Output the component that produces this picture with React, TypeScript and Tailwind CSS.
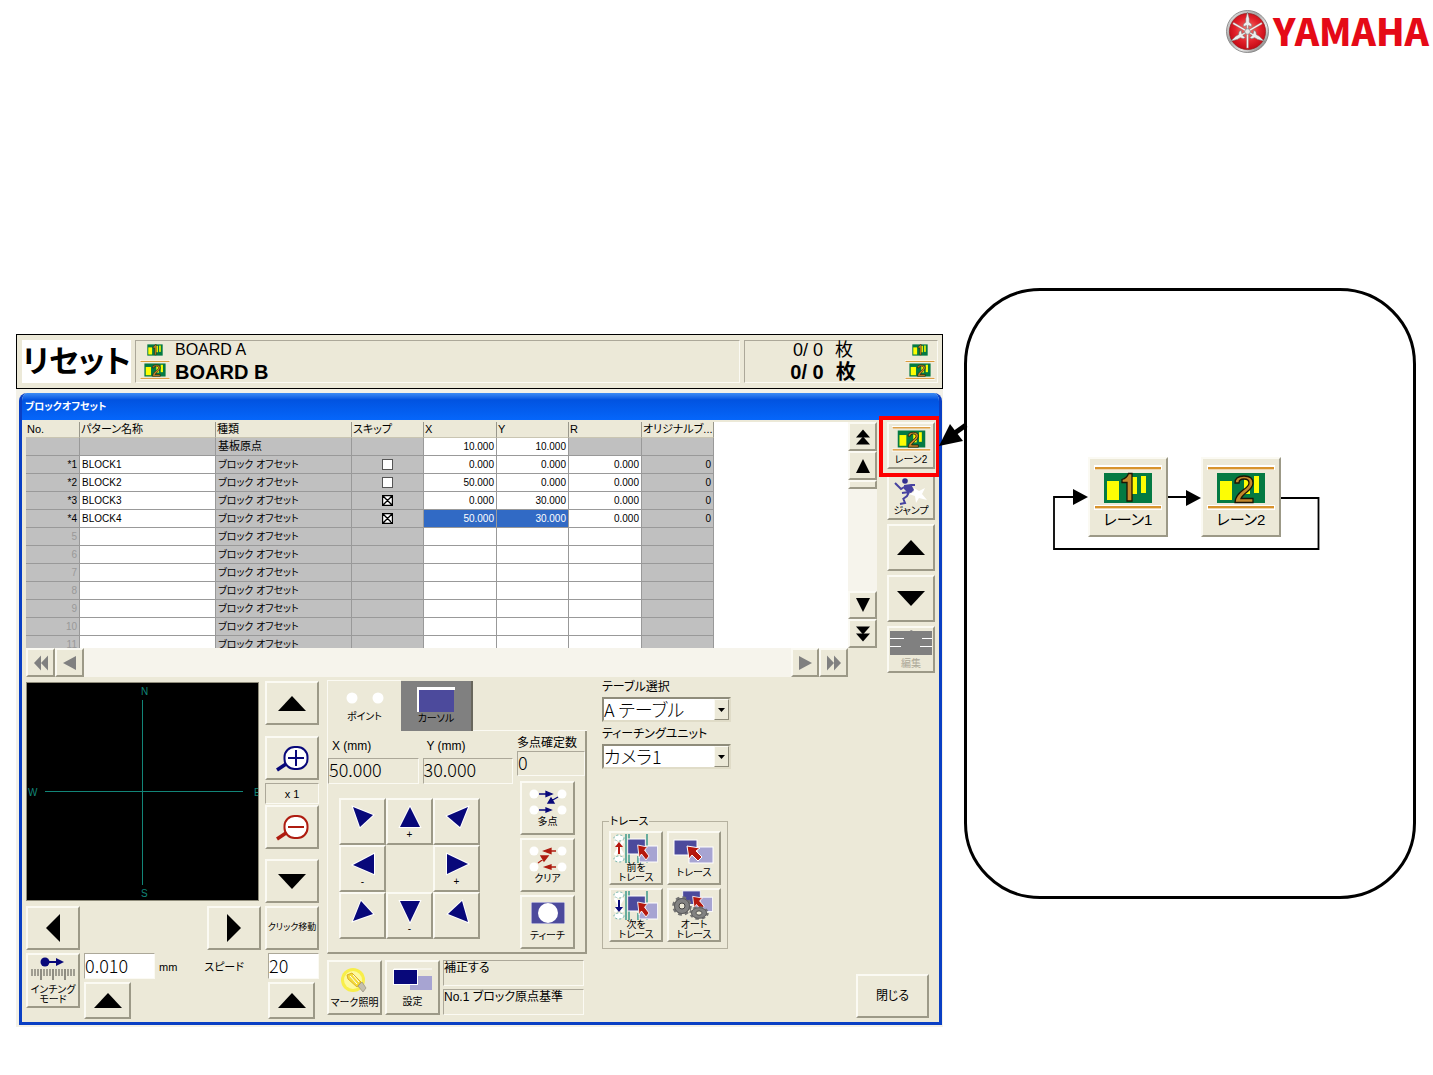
import { useState, type ReactNode } from "react";

const raised =
  "border-2 border-t-[#fbfaf3] border-l-[#fbfaf3] border-r-[#9c9987] border-b-[#9c9987] bg-[#ece9d8]";
const sunken =
  "border border-t-[#aca899] border-l-[#aca899] border-r-[#fbfaf3] border-b-[#fbfaf3]";
const value = "font-['Noto_Sans_CJK_JP',sans-serif] text-[18px] font-light";

type BtnProps = { label: string; className?: string; children?: ReactNode };

function Btn({ label, className = "", children }: BtnProps) {
  return (
    <button
      type="button"
      aria-label={label}
      className={`${raised} flex shrink-0 flex-col items-center justify-center text-center ${className}`}
    >
      {children}
    </button>
  );
}

function Tri({ dir, w = 28, h = 15, color = "#000" }: { dir: "up" | "down" | "left" | "right"; w?: number; h?: number; color?: string }) {
  const pts = {
    up: `${w / 2},0 ${w},${h} 0,${h}`,
    down: `0,0 ${w},0 ${w / 2},${h}`,
    left: `${w},0 ${w},${h} 0,${h / 2}`,
    right: `0,0 ${w},${h / 2} 0,${h}`,
  }[dir];
  return (
    <svg width={w} height={h} viewBox={`0 0 ${w} ${h}`} aria-hidden="true">
      <polygon points={pts} fill={color} />
    </svg>
  );
}

function DoubleTri({ dir, color = "#000" }: { dir: "up" | "down" | "left" | "right"; color?: string }) {
  const pts = {
    up: ["8,0 15,8 1,8", "8,7 15,15 1,15"],
    down: ["1,0 15,0 8,8", "1,7 15,7 8,15"],
    left: ["8,0 8,15 1,7.5", "15,0 15,15 8,7.5"],
    right: ["1,0 8,7.5 1,15", "8,0 15,7.5 8,15"],
  }[dir];
  return (
    <svg width="16" height="16" viewBox="0 0 16 15" aria-hidden="true">
      <polygon points={pts[0]} fill={color} />
      <polygon points={pts[1]} fill={color} />
    </svg>
  );
}

function LaneBoard({ n, rails = true, className }: { n: 1 | 2; rails?: boolean; className: string }) {
  return (
    <svg className={className} viewBox={rails ? "0 0 68 46" : "9 7 50 32"} preserveAspectRatio="none" aria-hidden="true">
      {rails && (
        <>
          <rect x="0" y="0" width="68" height="5" fill="#fff" />
          <rect x="1" y="2" width="66" height="2.4" fill="#d8932c" />
          <rect x="0" y="40" width="68" height="5" fill="#fff" />
          <rect x="1" y="41" width="66" height="2.4" fill="#d8932c" />
        </>
      )}
      <rect x="10" y="8" width="48" height="30" fill="#047a43" />
      <rect x="13" y="16" width="12" height="19" fill="#fdfd04" />
      <rect x="37" y="12" width="6" height="17" fill="#fdfd04" />
      <rect x="47" y="11" width="5" height="17" fill="#fdfd04" />
      {n === 1 ? (
        <path d="M38 8.500V36H33V17.500H28V14.500Q33 13 34.500 8.500Z" fill="#c4882c" stroke="#1c1403" strokeWidth="1.300" />
      ) : (
        <path
          d="M28 18Q28 11 37 11Q46 11 46 18Q46 22 40 27Q35 31 34 33.500H46V37.500H28Q28 31 36 25Q42 21 42 18Q42 14 37 14Q32 14 32 18Z"
          fill="#c4882c"
          stroke="#1c1403"
          strokeWidth="1.300"
        />
      )}
    </svg>
  );
}

function Jumper() {
  return (
    <svg width="34" height="28" viewBox="0 0 34 28" aria-hidden="true">
      <path d="M20 11l5 3 6-3-3 6 5 6-8-2-3 5-1-7-6-2 5-2z" fill="#fff" />
      <circle cx="11" cy="4" r="2.800" fill="#33308f" />
      <path d="M10 8l7-1 3 6-3 3-4-1-3-3z" fill="#4743a0" />
      <path d="M1 6l6 6 5-3M17 8l4 0M15 15l-7 1M15 15l-2 4-4 3M9 21l2 5-5 1" fill="none" stroke="#4743a0" strokeWidth="2" />
    </svg>
  );
}

function EditIcon() {
  return (
    <svg width="42" height="26" viewBox="0 0 42 26" aria-hidden="true">
      <path d="M0 1h20l1-1 2 1h19v24H0z" fill="#808080" />
      <path d="M0 8.500h14M32 8.500h10M0 16.500h11M30 16.500h12" stroke="#fff" strokeWidth="1" />
    </svg>
  );
}

function Magnifier({ plus }: { plus: boolean }) {
  const c = plus ? "#08087a" : "#ae1c10";
  return (
    <svg width="33" height="27" viewBox="0 0 33 27" aria-hidden="true">
      <path d="M1 25l9-6" stroke={c} strokeWidth="3.500" />
      <rect x="8.500" y="2" width="23" height="22" rx="10" fill="#fff" stroke={c} strokeWidth="2" />
      <path d={plus ? "M12 13h16M20 5v16" : "M12 13h16"} stroke={c} strokeWidth="2" />
    </svg>
  );
}

function InchingIcon() {
  return (
    <svg width="44" height="24" viewBox="0 0 44 24" aria-hidden="true">
      <circle cx="14" cy="5" r="4.500" fill="#08087a" />
      <path d="M18 4h7V1l8 4-8 4V6h-7z" fill="#08087a" />
      <path d="M1 12v7M4 12v7M7 12v7M13 12v7M16 12v7M19 12v7M25 12v7M28 12v7M31 12v7M37 12v7M40 12v7M43 12v7" stroke="#77756c" strokeWidth="1.300" />
      <path d="M10 12v11M22 12v11M34 12v11" stroke="#77756c" strokeWidth="1.600" />
    </svg>
  );
}

const padShapes = {
  nw: "3,3 23,11 10,23",
  n: "13,3 23,23 3,23",
  ne: "24,3 3,12 16,23",
  w: "24,3 24,23 3,14",
  e: "3,3 24,13 3,23",
  sw: "11,3 23,16 3,23",
  s: "3,3 23,3 13,24",
  se: "18,3 24,24 4,16",
};

function PadButton({ dir, sign = "" }: { dir: keyof typeof padShapes; sign?: string }) {
  return (
    <button
      type="button"
      aria-label={`移動 ${dir}`}
      className={`${raised} flex size-[47px] flex-col items-center pt-1`}
    >
      <svg width="26" height="26" viewBox="0 0 26 26" className="shrink-0" aria-hidden="true">
        <polygon points={padShapes[dir]} fill="#08087a" stroke="#fff" strokeWidth="2" paintOrder="stroke" />
      </svg>
      <span className="text-[10px] leading-[10px]">{sign}</span>
    </button>
  );
}

function MultiPoint({ clear = false }: { clear?: boolean }) {
  const c = clear ? "#ae1c10" : "#08087a";
  return (
    <svg width="38" height="28" viewBox="0 0 38 28" aria-hidden="true">
      <g fill="#fff">
        <circle cx="5" cy="6" r="4.500" />
        <circle cx="33" cy="6" r="4.500" />
        <circle cx="5" cy="22" r="4.500" />
        <circle cx="33" cy="22" r="4.500" />
      </g>
      {clear ? (
        <g fill={c} stroke={c} strokeWidth="1.300">
          <path d="M27 6H17M22 3.500v5L15 6zM27 22H17M22 20v4l-6-2zM9 18l7-5M12 11l7 0-4 5z" />
        </g>
      ) : (
        <g fill={c} stroke={c} strokeWidth="1.300">
          <path d="M10 6h10M17 3.500v5L23 6zM10 22h10M17 20v4l5-2zM29 9l-7 4M22 10l-3 5 6 0z" />
        </g>
      )}
    </svg>
  );
}

function TeachIcon() {
  return (
    <svg width="34" height="22" viewBox="0 0 34 22" aria-hidden="true">
      <rect width="34" height="22" fill="#4c4a9c" stroke="#fff" strokeWidth="1" />
      <circle cx="17" cy="11" r="10" fill="#fff" />
    </svg>
  );
}

function LampIcon() {
  return (
    <svg width="30" height="30" viewBox="0 0 30 30" aria-hidden="true">
      <circle cx="13" cy="13" r="12" fill="#f8ee4a" />
      <circle cx="13" cy="13" r="9" fill="#fdf9a0" />
      <path d="M7 8l5-2 9 9-4 5-9-8z" fill="#f4dc3a" stroke="#dcae28" />
      <path d="M10 9l7 8M13 8l6 7" stroke="#fff" />
      <path d="M18 19l4-4 4 6-3 4z" fill="#c5bfae" stroke="#958f7c" strokeWidth=".7" />
    </svg>
  );
}

function SettingIcon() {
  return (
    <svg width="40" height="24" viewBox="0 0 40 24" aria-hidden="true">
      <path d="M1 1h38" stroke="#fff" />
      <rect x="17" y="8" width="22" height="14" fill="#a7a4d2" />
      <rect x="0" y="1" width="25" height="16" fill="#fff" />
      <rect x="1" y="2" width="23" height="14" fill="#08087a" />
    </svg>
  );
}

function TraceBase() {
  return (
    <>
      <rect x="16" y="8" width="24" height="16" fill="#a7a4d2" stroke="#fff" />
      <rect x="1" y="1" width="23" height="15" fill="#4c4a9c" stroke="#fff" />
      <path d="M14 7l13 2-4 3 6 6-4 4-6-6-3 4z" fill="#b5180e" stroke="#fff" />
    </>
  );
}

function TraceIcon() {
  return (
    <svg width="42" height="25" viewBox="0 0 42 25" aria-hidden="true">
      <TraceBase />
    </svg>
  );
}

function TraceStepIcon({ next = false }: { next?: boolean }) {
  return (
    <svg width="46" height="29" viewBox="0 0 46 29" aria-hidden="true">
      <ellipse cx="6" cy="4" rx="5" ry="3" fill="#fff" stroke="#66b0a6" strokeDasharray="2 2" />
      <ellipse cx="6" cy="25" rx="5" ry="3" fill="#fff" stroke="#66b0a6" strokeDasharray="2 2" />
      <path d="M2 7l8 14M10 7L2 21" stroke="#fff" strokeWidth="3" />
      {next ? (
        <path d="M5 9h2v7h3l-4 5-4-5h3z" fill="#08087a" />
      ) : (
        <path d="M5 20h2v-7h3l-4-5-4 5h3z" fill="#b5180e" />
      )}
      <path d="M13 0v29M16 0v29M25 22v7M34 0v29" stroke="#128578" strokeWidth="1.200" />
      <g transform="translate(14 4) scale(.76 1)">
        <TraceBase />
      </g>
    </svg>
  );
}

function Gear({ x, y }: { x: number; y: number }) {
  return (
    <g transform={`translate(${x} ${y})`}>
      <circle r="8" fill="#737373" stroke="#737373" strokeWidth="3.500" strokeDasharray="3.500 2.800" />
      <circle r="7.500" fill="#828282" stroke="#5c5c5c" />
      <circle r="3" fill="#ece9d8" stroke="#444" />
    </g>
  );
}

function AutoTraceIcon() {
  return (
    <svg width="44" height="30" viewBox="0 0 44 30" aria-hidden="true">
      <g transform="translate(10 0) scale(.76 .9)">
        <TraceBase />
      </g>
      <Gear x={10} y={16} />
      <g transform="translate(27 23) scale(1 .7)">
        <Gear x={0} y={0} />
      </g>
    </svg>
  );
}

function YamahaMark() {
  return (
    <svg width="43" height="43" viewBox="0 0 44 44" aria-hidden="true">
      <defs>
        <linearGradient id="ring" x1="0" y1="0" x2="1" y2="1">
          <stop offset="0" stopColor="#f2f2f2" />
          <stop offset=".4" stopColor="#a5a5a5" />
          <stop offset=".65" stopColor="#e8e8e8" />
          <stop offset="1" stopColor="#555" />
        </linearGradient>
        <radialGradient id="disc" cx=".5" cy=".45" r=".55">
          <stop offset="0" stopColor="#f48076" />
          <stop offset=".6" stopColor="#e3222b" />
          <stop offset="1" stopColor="#c40915" />
        </radialGradient>
      </defs>
      <circle cx="22" cy="22" r="21.500" fill="url(#ring)" stroke="#777" strokeWidth=".8" />
      <circle cx="22" cy="22" r="18.500" fill="url(#disc)" stroke="#8e1a1a" strokeWidth=".7" />
      {[0, 120, 240].map((a) => (
        <g key={a} transform={`rotate(${a} 22 22)`}>
          <path d="M22 2l1.800 7v3.500l2.400 2v2.600l-3.200-1.300-.3 6.200h-1.400l-.3-6.200-3.200 1.300v-2.600l2.400-2V9z" fill="#eee" stroke="#6d6d6d" strokeWidth=".5" />
          <path d="M21 22h2v17h-2z" fill="#f4f4f4" stroke="#8b5a5a" strokeWidth=".4" />
        </g>
      ))}
      <circle cx="22" cy="22" r="2.800" fill="#e9e9e9" stroke="#777" strokeWidth=".6" />
    </svg>
  );
}

type Row = { no: string; name?: string; skip?: boolean; x?: string; y?: string; r?: string; org?: string; selected?: boolean };

const rows: Row[] = [
  { no: "*1", name: "BLOCK1", skip: false, x: "0.000", y: "0.000", r: "0.000", org: "0" },
  { no: "*2", name: "BLOCK2", skip: false, x: "50.000", y: "0.000", r: "0.000", org: "0" },
  { no: "*3", name: "BLOCK3", skip: true, x: "0.000", y: "30.000", r: "0.000", org: "0" },
  { no: "*4", name: "BLOCK4", skip: true, x: "50.000", y: "30.000", r: "0.000", org: "0", selected: true },
  { no: "5" }, { no: "6" }, { no: "7" }, { no: "8" }, { no: "9" }, { no: "10" }, { no: "11" },
];

function SkipBox({ label, initial }: { label: string; initial: boolean }) {
  const [on, setOn] = useState(initial);
  return (
    <label className="grid justify-center">
      <input
        type="checkbox"
        aria-label={label}
        checked={on}
        onChange={() => setOn(!on)}
        className="peer col-start-1 row-start-1 size-[11px] appearance-none border border-[#555] bg-white"
      />
      <svg viewBox="0 0 11 11" className="pointer-events-none col-start-1 row-start-1 hidden size-[11px] peer-checked:block" aria-hidden="true">
        <path d="M.5.5h10v10H.5zM1 1l9 9M10 1l-9 9" fill="none" stroke="#000" strokeWidth="1.400" />
      </svg>
    </label>
  );
}

const headCell =
  "h-4 border-r border-b border-r-[#9a988c] border-b-[#c9c5b2] bg-[#ece9d8] px-px py-0 text-left text-[11px] font-normal";
const cell = "h-[18px] border-r border-b border-[#999] px-0.5 py-0 leading-[17px]";

function OffsetTable() {
  return (
    <table className="w-[688px] shrink-0 table-fixed border-separate border-spacing-0 text-[10px] leading-[15px] whitespace-nowrap">
      <colgroup>
        <col className="w-[54px]" />
        <col className="w-[136px]" />
        <col className="w-[136px]" />
        <col className="w-[72px]" />
        <col className="w-[73px]" />
        <col className="w-[72px]" />
        <col className="w-[73px]" />
        <col className="w-[72px]" />
      </colgroup>
      <thead>
        <tr>
          {["No.", "パターン名称", "種類", "スキップ", "X", "Y", "R", "オリジナルブ..."].map((h) => (
            <th key={h} scope="col" className={headCell}>{h}</th>
          ))}
        </tr>
      </thead>
      <tbody>
        <tr>
          <td className={`${cell} bg-[#c0c0c0]`} />
          <td className={`${cell} bg-[#c0c0c0]`} />
          <td className={`${cell} bg-[#c0c0c0] text-[11px]`}>基板原点</td>
          <td className={`${cell} bg-[#c0c0c0]`} />
          <td className={`${cell} bg-white text-right`}>10.000</td>
          <td className={`${cell} bg-white text-right`}>10.000</td>
          <td className={`${cell} bg-[#c0c0c0]`} />
          <td className={`${cell} bg-[#c0c0c0]`} />
        </tr>
        {rows.map((r) => {
          const num = r.selected ? "bg-[#316ac5] text-white" : "bg-white";
          return (
            <tr key={r.no}>
              <td className={`${cell} bg-[#c0c0c0] text-right ${r.name ? "" : "text-[#999]"}`}>{r.no}</td>
              <td className={`${cell} bg-white`}>{r.name}</td>
              <td className={`${cell} bg-[#c0c0c0]`}>ブロック オフセット</td>
              <td className={`${cell} bg-[#c0c0c0]`}>
                {r.skip !== undefined && <SkipBox label={`${r.name} スキップ`} initial={r.skip} />}
              </td>
              <td className={`${cell} text-right ${num}`}>{r.x}</td>
              <td className={`${cell} text-right ${num}`}>{r.y}</td>
              <td className={`${cell} bg-white text-right`}>{r.r}</td>
              <td className={`${cell} bg-[#c0c0c0] text-right`}>{r.org}</td>
            </tr>
          );
        })}
      </tbody>
    </table>
  );
}

function StatusBar() {
  return (
    <header className="flex h-[55px] items-stretch gap-1 border border-black bg-[#ece9d8] p-[5px] pr-1">
      <div className="flex w-[109px] items-center justify-center bg-white text-[31px] leading-none font-bold">リセット</div>
      <div className={`${sunken} grid flex-1 grid-cols-[30px_1fr] grid-rows-[17px_24px] items-center gap-x-[5px] pl-1`}>
        <LaneBoard n={1} rails={false} className="h-3 w-4 justify-self-center" />
        <span className="text-[16px] leading-4">BOARD A</span>
        <LaneBoard n={2} className="h-5 w-[30px]" />
        <span className="pt-1 text-[20px] leading-5 font-bold">BOARD B</span>
      </div>
      <div className={`${sunken} grid w-[194px] grid-cols-[1fr_30px] grid-rows-[17px_24px] items-center gap-x-1 pr-0.5`}>
        <span className="flex justify-center gap-3 text-[18px] leading-[18px]"><span>0/ 0</span><span>枚</span></span>
        <LaneBoard n={1} rails={false} className="h-3 w-4 justify-self-center" />
        <span className="flex justify-center gap-3 pt-1 text-[20px] leading-5 font-bold"><span>0/ 0</span><span>枚</span></span>
        <LaneBoard n={2} className="h-5 w-[30px]" />
      </div>
    </header>
  );
}

function GridArea() {
  return (
    <div className="flex gap-2.5 pr-1">
      <div className="min-w-0 flex-1">
        <div className="flex h-[226px]">
          <div className="min-w-0 flex-1 overflow-hidden bg-white">
            <OffsetTable />
          </div>
          <div className="flex w-[29px] flex-col bg-[#f6f4ec]">
            <Btn label="先頭へ" className="h-[29px]"><DoubleTri dir="up" /></Btn>
            <Btn label="上へ" className="h-[29px]"><Tri dir="up" w={14} h={14} /></Btn>
            <div className={`${raised} h-[9px]`} />
            <Btn label="下へ" className="mt-auto h-7"><Tri dir="down" w={14} h={14} /></Btn>
            <Btn label="末尾へ" className="h-[29px]"><DoubleTri dir="down" /></Btn>
          </div>
        </div>
        <div className="mr-[29px] flex h-[29px] bg-[#f6f4ec]">
          <Btn label="左端へ" className="w-[29px]"><DoubleTri dir="left" color="#808080" /></Btn>
          <Btn label="左へ" className="w-[29px]"><Tri dir="left" w={13} h={14} color="#808080" /></Btn>
          <Btn label="右へ" className="ml-auto w-7"><Tri dir="right" w={13} h={14} color="#808080" /></Btn>
          <Btn label="右端へ" className="w-[29px]"><DoubleTri dir="right" color="#808080" /></Btn>
        </div>
      </div>
      <nav className="flex w-12 flex-col gap-1 text-[10px] leading-3">
        <div className="relative">
          <Btn label="レーン2" className="h-[47px] w-full gap-0.5">
            <LaneBoard n={2} className="h-[26px] w-[39px]" />
            <span>レーン2</span>
          </Btn>
          <div className="pointer-events-none absolute -top-1.5 -right-[5px] -bottom-2 -left-2 z-10 border-4 border-[#fe0000]" />
        </div>
        <Btn label="ジャンプ" className="h-[47px]"><Jumper /><span>ジャンプ</span></Btn>
        <Btn label="前へ" className="h-[47px]"><Tri dir="up" /></Btn>
        <Btn label="次へ" className="h-[47px]"><Tri dir="down" /></Btn>
        <Btn label="編集" className="h-[47px] gap-0.5 text-[#aca899]"><EditIcon /><span>編集</span></Btn>
      </nav>
    </div>
  );
}

function CameraPanel() {
  return (
    <section className="flex w-[293px] flex-col gap-[3px] pt-px">
      <div className="flex gap-1.5">
        <div className="mt-px mb-0.5 flex-1 border border-[#8f8c7b] bg-black">
          <svg width="100%" height="100%" viewBox="0 0 231 217" aria-hidden="true">
            <path d="M115.500 17v185M18 108.500h198" stroke="#128578" />
            <g fill="#128578" fontSize="10" fontFamily="Liberation Sans, sans-serif">
              <text x="114" y="12">N</text>
              <text x="114" y="214">S</text>
              <text x="1" y="113">W</text>
              <text x="227" y="113">E</text>
            </g>
          </svg>
        </div>
        <div className="flex w-[54px] flex-col">
          <Btn label="上へ移動" className="h-11"><Tri dir="up" /></Btn>
          <Btn label="拡大" className="mt-[11px] h-11"><Magnifier plus /></Btn>
          <div className={`${sunken} mt-[3px] mb-px h-[21px] text-center text-[11px] leading-5`}>x 1</div>
          <Btn label="縮小" className="h-11"><Magnifier plus={false} /></Btn>
          <Btn label="下へ移動" className="mt-2.5 h-11"><Tri dir="down" /></Btn>
        </div>
      </div>
      <div className="flex">
        <Btn label="左へ移動" className="h-11 w-[54px]"><Tri dir="left" w={14} h={28} /></Btn>
        <Btn label="右へ移動" className="ml-auto h-11 w-[54px]"><Tri dir="right" w={14} h={28} /></Btn>
        <Btn label="クリック移動" className="ml-1 h-11 w-[54px] text-[9px] whitespace-nowrap">クリック移動</Btn>
      </div>
      <div className="flex items-start text-[11px]">
        <Btn label="インチングモード" className="h-[55px] w-[54px] text-[10px] leading-[10px]">
          <InchingIcon />
          <span className="mt-1 whitespace-nowrap">インチング<br />モード</span>
        </Btn>
        <div className="ml-1 flex flex-col gap-[3px]">
          <input id="pitch" defaultValue="0.010" className={`${sunken} ${value} h-[26px] w-[71px] bg-white pb-0.5`} />
          <Btn label="ピッチを上げる" className="h-[37px] w-[47px]"><Tri dir="up" /></Btn>
        </div>
        <label htmlFor="pitch" className="ml-1 leading-[28px]">mm</label>
        <label htmlFor="speed" className="ml-auto pr-6 leading-[28px]">スピード</label>
        <div className="flex flex-col gap-[3px]">
          <input id="speed" defaultValue="20" className={`${sunken} ${value} h-[26px] w-[51px] bg-white pb-0.5`} />
          <Btn label="スピードを上げる" className="h-[37px] w-[47px]"><Tri dir="up" /></Btn>
        </div>
      </div>
    </section>
  );
}

function PositionPanel() {
  return (
    <section className="flex w-[260px] flex-col">
      <div className="flex h-[51px] text-[10px] leading-3">
        <button type="button" className="flex w-[74px] flex-col items-center border-t border-l border-[#fbfaf3] pt-2.5">
          <svg width="40" height="14" viewBox="0 0 40 14" aria-hidden="true">
            <circle cx="7" cy="7" r="5.500" fill="#fff" />
            <circle cx="33" cy="7" r="5.500" fill="#fff" />
          </svg>
          <span className="mt-1.5">ポイント</span>
        </button>
        <button type="button" className="mt-px flex w-[72px] flex-col items-center border-r-2 border-[#68665c] bg-[#808080] pt-1.5">
          <svg width="38" height="25" viewBox="0 0 38 25" aria-hidden="true">
            <rect width="38" height="3" fill="#fff" />
            <rect width="2" height="25" fill="#fff" />
            <rect x="2" y="3" width="35" height="22" fill="#4c4a9c" />
          </svg>
          <span className="mt-px">カーソル</span>
        </button>
        <div className="flex-1 border-b border-[#fbfaf3]" />
      </div>
      <div className="flex h-[223px] gap-1 border-r-2 border-b-2 border-l border-r-[#9c9987] border-b-[#9c9987] border-l-[#fbfaf3]">
        <div className="flex w-[185px] flex-col pt-1.5">
          <div className="flex gap-1 text-[12px]">
            <div className="flex-1"><div className="mb-[3px] pl-1 leading-[18px]">X (mm)</div><div className={`${sunken} ${value} h-[26px] leading-5`}>50.000</div></div>
            <div className="flex-1"><div className="mb-[3px] pl-1 leading-[18px]">Y (mm)</div><div className={`${sunken} ${value} h-[26px] leading-5`}>30.000</div></div>
          </div>
          <div className="mt-3.5 ml-[11px] grid w-[141px] grid-cols-3">
            <PadButton dir="nw" />
            <PadButton dir="n" sign="+" />
            <PadButton dir="ne" />
            <PadButton dir="w" sign="-" />
            <span />
            <PadButton dir="e" sign="+" />
            <PadButton dir="sw" />
            <PadButton dir="s" sign="-" />
            <PadButton dir="se" />
          </div>
        </div>
        <div className="flex flex-1 flex-col pt-1">
          <div className="text-[12px] leading-4 whitespace-nowrap">多点確定数</div>
          <div className={`${sunken} ${value} h-[25px] leading-5`}>0</div>
          <div className="mt-[5px] ml-[3px] flex flex-col gap-[3px] text-[10px] leading-3">
            <Btn label="多点" className="h-[54px] w-[55px]"><MultiPoint /><span>多点</span></Btn>
            <Btn label="クリア" className="h-[54px] w-[55px]"><MultiPoint clear /><span>クリア</span></Btn>
            <Btn label="ティーチ" className="h-[54px] w-[55px] gap-1.5"><TeachIcon /><span>ティーチ</span></Btn>
          </div>
        </div>
      </div>
      <div className="mt-1.5 flex gap-[3px] text-[10px] leading-3">
        <Btn label="マーク照明" className="h-[55px] w-[55px]"><LampIcon /><span className="whitespace-nowrap">マーク照明</span></Btn>
        <Btn label="設定" className="h-[55px] w-[55px] gap-1"><SettingIcon /><span>設定</span></Btn>
        <div className="mr-[3px] flex flex-1 flex-col gap-[3px] text-[12px] leading-[14px]">
          <div className={`${sunken} h-[26px]`}>補正する</div>
          <div className={`${sunken} h-[26px]`}>No.1 ブロック原点基準</div>
        </div>
      </div>
    </section>
  );
}

function Combo({ id, label, options }: { id: string; label: string; options: string[] }) {
  return (
    <div className="flex flex-col gap-[3px]">
      <label htmlFor={id} className="text-[12px] leading-[14px]">{label}</label>
      <div className="relative flex w-[129px]">
        <select id={id} className={`${value} h-[25px] w-full appearance-none border-2 border-t-[#8f8c7b] border-r-[#e0dcc8] border-b-[#e0dcc8] border-l-[#8f8c7b] bg-white pb-0.5 leading-5`}>
          {options.map((o) => <option key={o}>{o}</option>)}
        </select>
        <span className="pointer-events-none absolute top-0.5 right-0.5 flex h-[21px] w-[15px] items-center justify-center border border-t-[#fbfaf3] border-l-[#fbfaf3] border-r-[#8f8c7b] border-b-[#8f8c7b] bg-[#ece9d8]">
          <Tri dir="down" w={7} h={4} />
        </span>
      </div>
    </div>
  );
}

function UnitPanel() {
  return (
    <section className="flex flex-1 flex-col items-start">
      <div className="flex flex-col gap-[5px]">
        <Combo id="table" label="テーブル選択" options={["A テーブル", "B テーブル"]} />
        <Combo id="unit" label="ティーチングユニット" options={["カメラ1", "カメラ2"]} />
      </div>
      <fieldset className="mt-[45px] w-[126px] border border-[#b5b19f] px-1.5 pb-1.5">
        <legend className="px-px text-[11px] leading-[14px]">トレース</legend>
        <div className="mt-[3px] grid grid-cols-2 justify-between gap-x-1 gap-y-[3px] text-[10px] leading-[10px]">
          <Btn label="前をトレース" className="h-[54px]"><TraceStepIcon /><span>前を<br />トレース</span></Btn>
          <Btn label="トレース" className="h-[54px] gap-1"><TraceIcon /><span>トレース</span></Btn>
          <Btn label="次をトレース" className="h-[54px]"><TraceStepIcon next /><span>次を<br />トレース</span></Btn>
          <Btn label="オートトレース" className="h-[54px]"><AutoTraceIcon /><span>オート<br />トレース</span></Btn>
        </div>
      </fieldset>
      <Btn label="閉じる" className="mt-auto mr-2.5 mb-px h-11 w-[73px] self-end text-[12px]">閉じる</Btn>
    </section>
  );
}

function OffsetWindow() {
  return (
    <div className="mt-1 flex flex-col overflow-hidden rounded-t-lg border-x-3 border-b-3 border-[#0a3fc4] bg-[#ece9d8]">
      <h1 className="-mx-[3px] h-[27px] bg-linear-to-b from-[#3d8cf5] from-0% via-[#0253e0] via-25% to-[#0566fb] pl-1.5 text-[10px] leading-7 font-bold text-white">
        ブロックオフセット
      </h1>
      <div className="pt-0.5 pl-1">
        <GridArea />
        <div className="mt-[3px] flex pb-[3px]">
          <CameraPanel />
          <div className="ml-2"><PositionPanel /></div>
          <div className="ml-[15px] flex flex-1"><UnitPanel /></div>
        </div>
      </div>
    </div>
  );
}

function LaneCallout() {
  return (
    <aside className="relative h-[611px] rounded-[76px] border-3 border-black bg-white">
      <svg width="32" height="30" viewBox="0 0 32 30" className="absolute top-[130px] -left-[29px]" aria-hidden="true">
        <path d="M28 4L14 14" stroke="#000" strokeWidth="5" />
        <polygon points="1,25 12,3 25,20" fill="#000" />
      </svg>
      <div className="relative mt-[166px] ml-[86px] flex w-[267px] gap-[33px] pb-3 pl-[35px] text-[15px] leading-[18px]">
        <svg width="267" height="94" viewBox="0 0 267 94" className="absolute top-0 left-0" aria-hidden="true">
          <path d="M22 40H1V92H265.500V41H228M115 40h20" fill="none" stroke="#000" strokeWidth="1.800" />
          <polygon points="20,32 35,40 20,48" />
          <polygon points="133,33 148,41 133,49" />
        </svg>
        <Btn label="レーン1" className="relative h-20 w-20"><LaneBoard n={1} className="h-[46px] w-[68px]" /><span>レーン1</span></Btn>
        <Btn label="レーン2" className="relative h-20 w-20"><LaneBoard n={2} className="h-[46px] w-[68px]" /><span>レーン2</span></Btn>
      </div>
    </aside>
  );
}

export default function App() {
  return (
    <div className="min-h-screen bg-white font-['Liberation_Sans','Noto_Sans_CJK_JP',sans-serif] text-black [font-feature-settings:'palt']">
      <div className="flex h-[288px] items-start justify-end gap-1 pt-2.5 pr-1">
        <YamahaMark />
        <span className="font-['Noto_Sans_CJK_JP',sans-serif] text-[37px] leading-10 font-black text-[#e50a17]">YAMAHA</span>
      </div>
      <main className="grid grid-cols-[minmax(0,927fr)_minmax(0,452fr)] items-start gap-[21px] pr-[17px] pl-4">
        <div className="mt-[46px] bg-[#f3f1e8] pb-0.5">
          <StatusBar />
          <div className="pr-px pl-[3px]">
            <OffsetWindow />
          </div>
        </div>
        <LaneCallout />
      </main>
    </div>
  );
}
